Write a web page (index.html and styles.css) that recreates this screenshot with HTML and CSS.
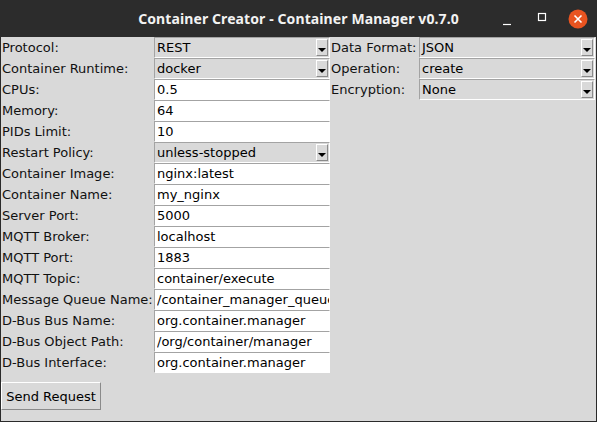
FILE: index.html
```html
<!DOCTYPE html>
<html>
<head>
<meta charset="utf-8">
<title>Container Creator - Container Manager v0.7.0</title>
<link rel="stylesheet" href="styles.css">
</head>
<body>
<div class="window">
  <div class="titlebar">
    <span class="title">Container Creator - Container Manager v0.7.0</span>
    <div class="controls">
      <span class="ctl min"><svg width="10" height="10" viewBox="0 0 10 10"><line x1="1" y1="8.5" x2="9" y2="8.5" stroke="#fff" stroke-width="1.2"/></svg></span>
      <span class="ctl max"><svg width="10" height="10" viewBox="0 0 10 10"><rect x="1.5" y="1.5" width="7" height="7" fill="none" stroke="#fff" stroke-width="1.2"/></svg></span>
      <span class="ctl close"><svg width="20" height="20" viewBox="0 0 20 20"><circle cx="10" cy="10" r="9.5" fill="#e95420"/><path d="M6.5 6.5 L13.5 13.5 M13.5 6.5 L6.5 13.5" stroke="#fff" stroke-width="1.6"/></svg></span>
    </div>
  </div>
  <div class="content">
    <div class="form">
      <div class="lbl c1">Protocol:</div>
      <div class="combo c2"><span class="val">REST</span><span class="arrow"><i></i></span></div>
      <div class="lbl c3">Data Format:</div>
      <div class="combo c4"><span class="val">JSON</span><span class="arrow"><i></i></span></div>

      <div class="lbl c1">Container Runtime:</div>
      <div class="combo c2"><span class="val">docker</span><span class="arrow"><i></i></span></div>
      <div class="lbl c3">Operation:</div>
      <div class="combo c4"><span class="val">create</span><span class="arrow"><i></i></span></div>

      <div class="lbl c1">CPUs:</div>
      <input class="entry c2" type="text" value="0.5">
      <div class="lbl c3">Encryption:</div>
      <div class="combo c4"><span class="val">None</span><span class="arrow"><i></i></span></div>

      <div class="lbl c1">Memory:</div>
      <input class="entry c2" type="text" value="64">

      <div class="lbl c1">PIDs Limit:</div>
      <input class="entry c2" type="text" value="10">

      <div class="lbl c1">Restart Policy:</div>
      <div class="combo c2"><span class="val">unless-stopped</span><span class="arrow"><i></i></span></div>

      <div class="lbl c1">Container Image:</div>
      <input class="entry c2" type="text" value="nginx:latest">

      <div class="lbl c1">Container Name:</div>
      <input class="entry c2" type="text" value="my_nginx">

      <div class="lbl c1">Server Port:</div>
      <input class="entry c2" type="text" value="5000">

      <div class="lbl c1">MQTT Broker:</div>
      <input class="entry c2" type="text" value="localhost">

      <div class="lbl c1">MQTT Port:</div>
      <input class="entry c2" type="text" value="1883">

      <div class="lbl c1">MQTT Topic:</div>
      <input class="entry c2" type="text" value="container/execute">

      <div class="lbl c1">Message Queue Name:</div>
      <input class="entry c2" type="text" value="/container_manager_queue">

      <div class="lbl c1">D-Bus Bus Name:</div>
      <input class="entry c2" type="text" value="org.container.manager">

      <div class="lbl c1">D-Bus Object Path:</div>
      <input class="entry c2" type="text" value="/org/container/manager">

      <div class="lbl c1">D-Bus Interface:</div>
      <input class="entry c2" type="text" value="org.container.manager">
    </div>
    <button class="send" type="button">Send Request</button>
  </div>
</div>
</body>
</html>
```
FILE: styles.css
```css
* { box-sizing: border-box; }
html, body {
  margin: 0;
  padding: 0;
  width: 597px;
  height: 422px;
  overflow: hidden;
  background: #d9d9d9;
}
.window {
  width: 597px;
  height: 422px;
  display: flex;
  flex-direction: column;
  font-family: "DejaVu Sans", sans-serif;
  font-size: 13px;
  color: #000;
}
.titlebar {
  height: 37px;
  flex: none;
  background: #2c2c2c;
  position: relative;
  display: flex;
  align-items: center;
  justify-content: center;
}
.title {
  color: #f2f2f2;
  font-family: "Noto Sans", "DejaVu Sans", sans-serif;
  font-weight: bold;
  font-size: 14px;
  letter-spacing: 0.1px;
}
.controls {
  position: absolute;
  right: 9px;
  top: 8px;
  display: flex;
  align-items: center;
  gap: 0;
}
.ctl { display: block; line-height: 0; }
.min { margin-right: 25px; margin-top: 4px; }
.max { margin-right: 21px; margin-top: -3px; }
.close { margin-top: 1px; }
.content {
  flex: 1;
  background: #d9d9d9;
  border-left: 1px solid #2a2a2a;
  border-right: 1px solid #2a2a2a;
  border-bottom: 1px solid #2a2a2a;
  display: flex;
  flex-direction: column;
  align-items: flex-start;
}
.form {
  display: grid;
  grid-template-columns: 153px 176px 89px 176px;
  grid-auto-rows: 21px;
}
.c1 { grid-column: 1; }
.c2 { grid-column: 2; }
.c3 { grid-column: 3; }
.c4 { grid-column: 4; }
.lbl {
  padding-left: 1px;
  line-height: 21px;
  white-space: nowrap;
  color: #111;
}
.entry {
  display: block;
  width: 176px;
  height: 21px;
  margin: 0;
  padding: 0 0 0 2px;
  border-style: solid;
  border-width: 1px;
  border-color: #a3a3a3 #ffffff #ffffff #a3a3a3;
  background: #fff;
  font-family: "DejaVu Sans", sans-serif;
  font-size: 13px;
  color: #000;
  outline: none;
  border-radius: 0;
}
.combo {
  display: flex;
  align-items: stretch;
  height: 21px;
  border-style: solid;
  border-width: 1px;
  border-color: #a3a3a3 #ffffff #ffffff #a3a3a3;
  background: #d9d9d9;
  padding: 1px;
}
.combo .val {
  flex: 1;
  padding-left: 1px;
  line-height: 17px;
  white-space: nowrap;
  overflow: hidden;
}
.arrow {
  flex: none;
  width: 12px;
  height: 17px;
  border-style: solid;
  border-width: 1px;
  border-color: #ffffff #8a8a8a #8a8a8a #ffffff;
  display: flex;
  justify-content: center;
  align-items: flex-end;
  padding-bottom: 3px;
}
.arrow i {
  display: block;
  width: 0;
  height: 0;
  border-left: 4px solid transparent;
  border-right: 4px solid transparent;
  border-top: 4px solid #000;
}
.send {
  margin: 9px 0 0 0;
  width: 100px;
  height: 28px;
  padding: 0;
  background: #d9d9d9;
  border-style: solid;
  border-width: 1px;
  border-color: #ffffff #8a8a8a #8a8a8a #ffffff;
  font-family: "DejaVu Sans", sans-serif;
  font-size: 13px;
  color: #000;
  border-radius: 0;
}
```
